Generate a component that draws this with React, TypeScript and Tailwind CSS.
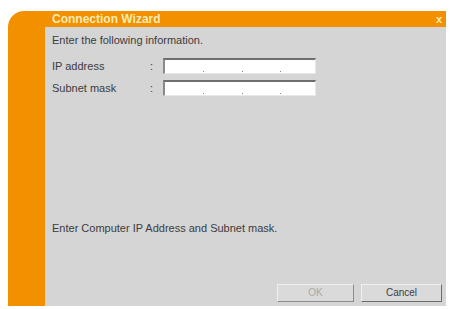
import React from "react";

function IpInput() {
  return (
    <div className="relative h-[16px] w-[153px] bg-white border-t-2 border-l-2 border-t-[#6e6e6e] border-l-[#8a8a8a] border-b border-r border-b-[#e8e8e8] border-r-[#e8e8e8]">
      <span className="absolute left-[38px] bottom-[1px] h-[1px] w-[1px] bg-[#888]" />
      <span className="absolute left-[77px] bottom-[1px] h-[1px] w-[1px] bg-[#888]" />
      <span className="absolute left-[115px] bottom-[1px] h-[1px] w-[1px] bg-[#888]" />
    </div>
  );
}

export default function App() {
  return (
    <div
      className="w-[451px] h-[309px] bg-white pt-[11px] pl-[8px] overflow-hidden"
      style={{ fontFamily: '"Liberation Sans", Arial, sans-serif' }}
    >
      <div className="flex flex-col w-[438px] h-[295px] rounded-tl-[16px] bg-[#f29000]">
        <div className="h-[16px] flex items-center justify-between pl-[44px] pr-[4px]">
          <span className="text-[12px] font-bold text-[#f9ebb4] leading-none">
            Connection Wizard
          </span>
          <span className="text-[11px] font-bold text-[#f9ebb4] leading-none">x</span>
        </div>
        <div className="flex flex-1">
          <div className="w-[37px]" />
          <div className="flex-1 bg-[#d5d5d5] flex flex-col pl-[7px] text-[11px] text-[#3c3c3c] leading-none">
            <div className="mt-[8px]">Enter the following information.</div>
            <div className="mt-[12px] flex items-center">
              <span className="w-[98px]">IP address</span>
              <span className="w-[13px]">:</span>
              <IpInput />
            </div>
            <div className="mt-[6px] flex items-center">
              <span className="w-[98px]">Subnet mask</span>
              <span className="w-[13px]">:</span>
              <IpInput />
            </div>
            <div className="mt-[127px]">Enter Computer IP Address and Subnet mask.</div>
            <div className="mt-[50px] flex justify-end gap-[7px] pr-[4px]">
              <button className="w-[77px] h-[18px] bg-[#dadada] border border-t-[#f0f0f0] border-l-[#f0f0f0] border-b-[#8c8c8c] border-r-[#8c8c8c] text-[10px] text-[#a8a8a8]">
                OK
              </button>
              <button className="w-[81px] h-[18px] bg-[#dadada] border border-t-[#f0f0f0] border-l-[#f0f0f0] border-b-[#6c6c6c] border-r-[#6c6c6c] text-[10px] text-[#3c3c3c]">
                Cancel
              </button>
            </div>
          </div>
        </div>
      </div>
    </div>
  );
}
